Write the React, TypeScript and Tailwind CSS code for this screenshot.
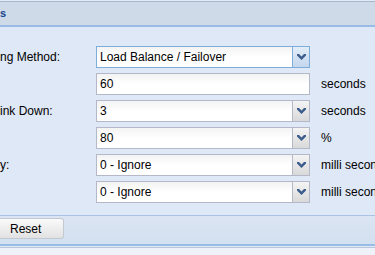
import React from 'react';

const font = "font-['Liberation_Sans',Arial,sans-serif]";

const Arrow = () => (
  <svg width="9" height="6" viewBox="0 0 9 6">
    <path d="M0 0h2l2.5 2.5L7 0h2v1.5L4.5 6 0 1.5z" fill="#3d5d8c" />
  </svg>
);

const Field = ({ value, combo = false, focus = false }: { value: string; combo?: boolean; focus?: boolean }) => (
  <div
    className={`flex h-[22px] w-[214px] shrink-0 border bg-white ${focus ? 'border-[#7eadd9]' : 'border-[#b5b8c8]'}`}
  >
    <div className="flex flex-1 items-center bg-gradient-to-b from-[#f3f3f3] via-white to-white pl-[3px] text-[12px] text-black">
      {value}
    </div>
    {combo && (
      <div
        className={`flex w-[17px] items-center justify-center border-l bg-gradient-to-b ${
          focus
            ? 'border-[#7eadd9] from-[#e3edf8] to-[#c3d7ee]'
            : 'border-[#b5b8c8] from-[#f4f4f4] to-[#d9d9d9]'
        }`}
      >
        <Arrow />
      </div>
    )}
  </div>
);

const Row = ({ label, unit, children }: { label: string; unit?: string; children: React.ReactNode }) => (
  <div className="flex h-[22px] w-max items-center">
    <div className="w-[96px] shrink-0 whitespace-nowrap text-[12px] text-black">{label}</div>
    {children}
    {unit && <div className="ml-[11px] shrink-0 whitespace-nowrap text-[12px] text-black">{unit}</div>}
  </div>
);

export default function App() {
  return (
    <div className={`h-[255px] w-[375px] overflow-hidden bg-[#dfe8f6] ${font}`}>
      <div className="h-px bg-[#e4ebf4]" />
      <div className="h-px bg-[#a3b7cf]" />
      <div className="flex h-[23px] items-center bg-[#cedae7] text-[11px] font-bold text-[#15428b]">s</div>
      <div className="h-[2px] bg-[#99bbe8]" />
      <div className="flex flex-col gap-[5px] pt-[19px]">
        <Row label="ng Method:">
          <Field value="Load Balance / Failover" combo focus />
        </Row>
        <Row label="" unit="seconds">
          <Field value="60" />
        </Row>
        <Row label="ink Down:" unit="seconds">
          <Field value="3" combo />
        </Row>
        <Row label="" unit="%">
          <Field value="80" combo />
        </Row>
        <Row label="y:" unit="milli seconds">
          <Field value="0 - Ignore" combo />
        </Row>
        <Row label="" unit="milli seconds">
          <Field value="0 - Ignore" combo />
        </Row>
      </div>
      <div className="mt-[12px] h-px bg-[#a9c2e2]" />
      <div className="flex h-[28px] items-start bg-gradient-to-b from-[#dbe5f3] to-[#d3e0f0] pt-[2px]">
        <button className="h-[21px] w-[64px] rounded-r-[3px] border border-l-0 border-[#c2c9d2] bg-gradient-to-b from-[#fafafa] to-[#e2e2e2] pl-[10px] text-left text-[12px] text-black">
          Reset
        </button>
      </div>
      <div className="h-[2px] bg-[#99bbe8]" />
      <div className="h-px bg-[#e2eaf5]" />
      <div className="h-px bg-[#b6c7dc]" />
      <div className="h-[10px] bg-[#eef2f8]" />
    </div>
  );
}
